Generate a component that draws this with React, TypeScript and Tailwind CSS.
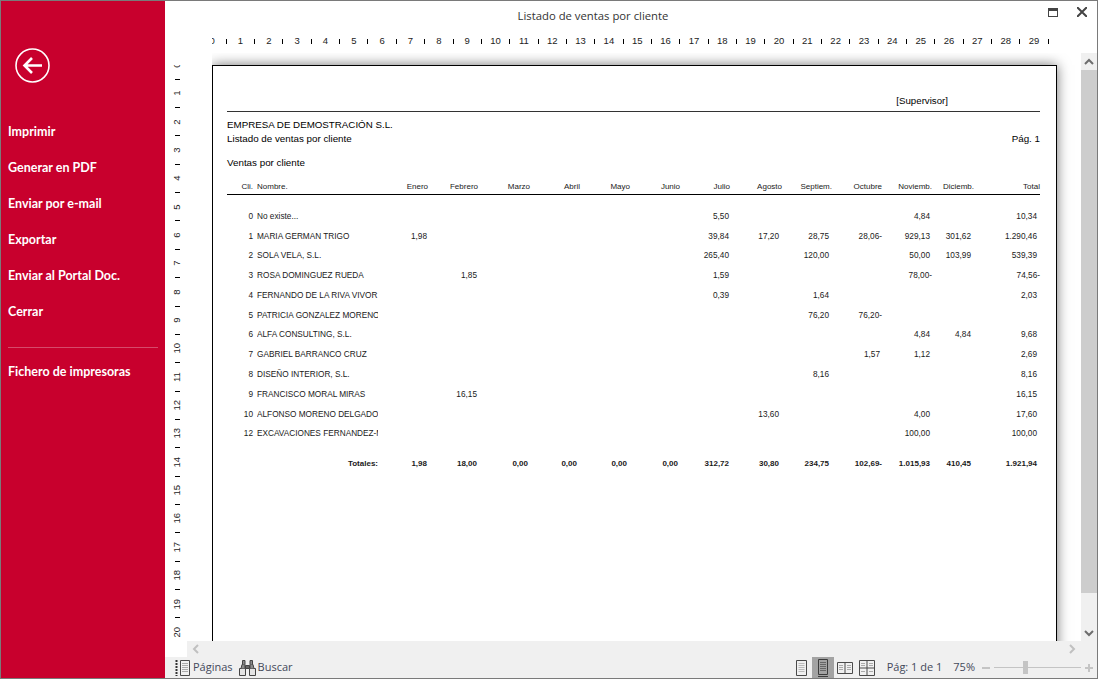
const MENU = ["Imprimir", "Generar en PDF", "Enviar por e-mail", "Exportar", "Enviar al Portal Doc.", "Cerrar"];

const HEADERS = ["Enero", "Febrero", "Marzo", "Abril", "Mayo", "Junio", "Julio", "Agosto", "Septiem.", "Octubre", "Noviemb.", "Diciemb.", "Total"];

// los importes no llegan al borde derecho de la cabecera, y no todos igual
const PADS = ["pr-[1px]", "pr-[1px]", "pr-[2px]", "pr-[3px]", "pr-[3px]", "pr-[2px]", "pr-[1px]", "pr-[3px]", "pr-[3px]", "pr-[2px]", "pr-[2px]", "pr-[3px]", "pr-[3px]"];

// fila: codigo, nombre, y columna -> importe
const ROWS: [string, string, Record<number, string>][] = [
  ["0", "No existe...", { 6: "5,50", 10: "4,84", 12: "10,34" }],
  ["1", "MARIA GERMAN TRIGO", { 0: "1,98", 6: "39,84", 7: "17,20", 8: "28,75", 9: "28,06-", 10: "929,13", 11: "301,62", 12: "1.290,46" }],
  ["2", "SOLA VELA, S.L.", { 6: "265,40", 8: "120,00", 10: "50,00", 11: "103,99", 12: "539,39" }],
  ["3", "ROSA DOMINGUEZ RUEDA", { 1: "1,85", 6: "1,59", 10: "78,00-", 12: "74,56-" }],
  ["4", "FERNANDO DE LA RIVA VIVOR", { 6: "0,39", 8: "1,64", 12: "2,03" }],
  ["5", "PATRICIA GONZALEZ MORENO", { 8: "76,20", 9: "76,20-" }],
  ["6", "ALFA CONSULTING, S.L.", { 10: "4,84", 11: "4,84", 12: "9,68" }],
  ["7", "GABRIEL BARRANCO CRUZ", { 9: "1,57", 10: "1,12", 12: "2,69" }],
  ["8", "DISEÑO INTERIOR, S.L.", { 8: "8,16", 12: "8,16" }],
  ["9", "FRANCISCO MORAL MIRAS", { 1: "16,15", 12: "16,15" }],
  ["10", "ALFONSO MORENO DELGADO", { 7: "13,60", 10: "4,00", 12: "17,60" }],
  ["12", "EXCAVACIONES FERNANDEZ-MARTIN", { 10: "100,00", 12: "100,00" }],
];

const TOTALS = ["1,98", "18,00", "0,00", "0,00", "0,00", "0,00", "312,72", "30,80", "234,75", "102,69-", "1.015,93", "410,45", "1.921,94"];

const GRID = "grid grid-cols-[26px_4px_121px_50px_50px_52px_50px_50px_50px_50px_52px_50px_50px_50px_42px_66px]";

function Amount({ value, col, bold }: { value?: string; col: number; bold?: boolean }) {
  const neg = value?.endsWith("-");
  return (
    <div className={`whitespace-nowrap text-right ${neg ? "pr-0" : PADS[col]} ${bold ? "font-bold" : ""}`}>{value}</div>
  );
}

function Row({ code, name, values }: { code: string; name: string; values: Record<number, string> }) {
  return (
    <div className={`${GRID} h-[19.8px] items-center`}>
      <div className="text-right">{code}</div>
      <div />
      <div className="overflow-hidden whitespace-nowrap">{name}</div>
      {HEADERS.map((h, i) => (
        <Amount key={h} value={values[i]} col={i} />
      ))}
    </div>
  );
}

function Report() {
  return (
    <div className="h-[1190px] w-[845px] shrink-0 border border-black bg-white pl-[14px] pt-[30px] font-['Liberation_Sans',sans-serif] text-black shadow-[0_0_12px_rgba(0,0,0,0.55)]">
      <div className="w-[813px]">
        <div className="flex h-[10px] justify-end pr-[92px] text-[9.7px] leading-[10px]">[Supervisor]</div>
        <div className="mt-[5px] h-[1px] bg-[#333]" />
        <div className="mt-[6px] text-[9.75px] leading-[14px]">EMPRESA DE DEMOSTRACIÓN S.L.</div>
        <div className="flex justify-between text-[9.8px] leading-[14px]">
          <span>Listado de ventas por cliente</span>
          <span>Pág. 1</span>
        </div>
        <div className="mt-[10px] text-[9.8px] leading-[14px]">Ventas por cliente</div>
        <div className={`${GRID} mt-[10px] h-[14px] items-center text-[8px] text-[#1a1a1a]`}>
          <div className="text-right">Cli.</div>
          <div />
          <div>Nombre.</div>
          {HEADERS.map((h) => (
            <div key={h} className="whitespace-nowrap text-right">{h}</div>
          ))}
        </div>
        <div className="h-[1px] bg-black" />
        <div className="mt-[12px] text-[8.25px] text-[#1a1a1a]">
          {ROWS.map(([code, name, values]) => (
            <Row key={code} code={code} name={name} values={values} />
          ))}
          <div className={`${GRID} mt-[10px] h-[19.8px] items-center text-[8px]`}>
            <div />
            <div />
            <div className="text-right font-bold">Totales:</div>
            {TOTALS.map((t, i) => (
              <Amount key={i} value={t} col={i} bold />
            ))}
          </div>
        </div>
      </div>
    </div>
  );
}

function HorizontalRuler() {
  return (
    <div className="flex h-[24px] shrink-0 pl-[47px] pr-[41px]">
      <div className="flex flex-1 items-center overflow-hidden font-['Liberation_Sans',sans-serif] text-[9.5px] text-[#222]">
        <div className="-ml-[7px] flex items-center">
          {Array.from({ length: 30 }, (_, i) => (
            <div key={i} className="flex items-center">
              <span className="w-[14.18px] text-center">{i}</span>
              <span className="flex w-[14.18px] justify-center"><span className="h-[5px] w-[1px] bg-black" /></span>
            </div>
          ))}
        </div>
      </div>
    </div>
  );
}

function VerticalRuler() {
  return (
    <div className="w-[47px] shrink-0 overflow-hidden pt-[12px] font-['Liberation_Sans',sans-serif] text-[9.5px] text-[#222]">
      <div className="h-full overflow-hidden">
        <div className="-mt-[7px] flex flex-col">
          {Array.from({ length: 21 }, (_, i) => (
            <div key={i} className="flex flex-col">
              <span className="flex h-[14.18px] w-[24px] items-center justify-center"><span className="-rotate-90 whitespace-nowrap">{i}</span></span>
              <span className="flex h-[14.18px] w-[24px] items-center justify-center"><span className="h-[1px] w-[5px] bg-black" /></span>
            </div>
          ))}
        </div>
      </div>
    </div>
  );
}

function Chevron({ d, color = "#6e6e6e" }: { d: string; color?: string }) {
  return (
    <svg width="10" height="10" viewBox="0 0 10 10" fill="none" stroke={color} strokeWidth="2">
      <path d={d} />
    </svg>
  );
}

function PagesIcon() {
  return (
    <svg width="16" height="18" viewBox="0 0 16 18" fill="none">
      <path d="M1.5 1v16" stroke="#333" strokeWidth="2" strokeDasharray="2 1" />
      <path d="M5.5 1.5h9v15h-9z" stroke="#4a4a4a" />
      <path d="M7 4.5h6M7 6.5h6M7 8.5h6M7 10.5h6M7 12.5h6" stroke="#aaa" />
    </svg>
  );
}

function BinocularsIcon() {
  return (
    <svg width="17" height="17" viewBox="0 0 17 17" fill="none" stroke="#444">
      <path d="M.5 9.5h6v7h-6zM10.5 9.5h6v7h-6z" fill="#e4e4e4" />
      <path d="M2 9.5l1-4h3v4M15 9.5l-1-4h-3v4" fill="#8a8a8a" />
      <path d="M3.5 5.5v-4h2.5v4M11 5.5v-4h2.5v4" fill="#8a8a8a" />
      <path d="M6.5 6.5h4v3h-4z" fill="#666" />
    </svg>
  );
}

function ViewIcon({ kind }: { kind: "page" | "full" | "book" | "grid" }) {
  if (kind === "page")
    return (
      <svg width="11" height="16" viewBox="0 0 11 16" fill="none">
        <path d="M.5.5h10v15H.5z" stroke="#4a4a4a" />
        <path d="M2.5 3.5h6M2.5 5.5h6M2.5 7.5h6M2.5 9.5h6M2.5 11.5h6" stroke="#bbb" />
      </svg>
    );
  if (kind === "full")
    return (
      <svg width="10" height="18" viewBox="0 0 10 18" fill="none">
        <path d="M.5.5h9v15H.5z" stroke="#3c3c3c" />
        <path d="M2 3.5h6M2 5.5h6M2 7.5h6M2 9.5h6M2 11.5h6" stroke="#666" />
        <path d="M0 17.5h10" stroke="#3c3c3c" />
      </svg>
    );
  if (kind === "book")
    return (
      <svg width="16" height="12" viewBox="0 0 16 12" fill="none">
        <path d="M.5.5h15v11H.5zM8 .5v11" stroke="#4a4a4a" />
        <path d="M2 3.5h4M2 5.5h4M2 7.5h4M10 3.5h4M10 5.5h4M10 7.5h4" stroke="#aaa" />
      </svg>
    );
  return (
    <svg width="16" height="16" viewBox="0 0 16 16" fill="none">
      <path d="M.5.5h15v15H.5zM8 .5v15M.5 8h15" stroke="#4a4a4a" />
      <path d="M2 3.5h4M10 3.5h4M2 5.5h4M10 5.5h4M2 11.5h4M10 11.5h4" stroke="#aaa" />
    </svg>
  );
}

export default function App() {
  return (
    <div className="flex h-[679px] w-[1098px] overflow-hidden border border-[#7a7a7a] bg-white">
      <aside className="flex w-[164px] shrink-0 flex-col bg-[#c8002d] font-['Lato',sans-serif] text-white">
        <div className="pl-[14px] pt-[47px]">
          <svg width="35" height="35" viewBox="0 0 35 35" fill="none" stroke="white">
            <circle cx="17.5" cy="17.5" r="16.5" strokeWidth="1.6" />
            <path d="M27 17.5H10M17 10L9.5 17.5l7.5 7.5" strokeWidth="2.6" />
          </svg>
        </div>
        <nav className="mt-[31px] flex flex-col px-[7px]">
          {MENU.map((m) => (
            <a key={m} className="flex h-[36px] items-center text-[12.5px] font-bold">{m}</a>
          ))}
          <div className="mt-[17px] h-[1px] bg-[#d64a6a]" />
          <a className="mt-[6px] flex h-[36px] items-center text-[12.5px] font-bold">Fichero de impresoras</a>
        </nav>
      </aside>

      <main className="flex min-w-0 flex-1 flex-col">
        <header className="relative flex h-[28px] shrink-0 items-center justify-center pr-[76px] pt-[2px] font-['Open_Sans',sans-serif] text-[11.3px] text-[#333]">
          Listado de ventas por cliente
          <div className="absolute right-[10px] top-[6px] flex items-center gap-[19px]">
            <div className="h-[9px] w-[10px] border border-t-[3px] border-[#444]" />
            <svg width="10" height="10" viewBox="0 0 10 10" stroke="#444" strokeWidth="2"><path d="M0 0l10 10M10 0L0 10" /></svg>
          </div>
        </header>

        <HorizontalRuler />

        <div className="flex min-h-0 flex-1">
          <VerticalRuler />
          <div className="min-w-0 flex-1 overflow-hidden pt-[12px]">
            <Report />
          </div>
          <div className="flex w-[16px] shrink-0 flex-col bg-[#f0f0f0]">
            <div className="flex h-[17px] items-center justify-center"><Chevron d="M1 7l4-4 4 4" /></div>
            <div className="h-[523px] bg-[#cdcdcd]" />
            <div className="flex-1" />
            <div className="flex h-[17px] items-center justify-center"><Chevron d="M1 3l4 4 4-4" /></div>
          </div>
        </div>

        <div className="flex h-[16px] shrink-0">
          <div className="w-[22px] bg-white" />
          <div className="flex flex-1 items-center justify-between bg-[#f0f0f0] px-[4px] pr-[20px]">
            <Chevron d="M7 1L3 5l4 4" color="#c0c0c0" />
            <Chevron d="M3 1l4 4-4 4" color="#c0c0c0" />
          </div>
        </div>

        <footer className="flex h-[21px] shrink-0 items-center bg-[#f0f0f0] pl-[10px] font-['Open_Sans',sans-serif] text-[11px] text-[#44495a]">
          <PagesIcon />
          <span className="ml-[2px]">Páginas</span>
          <span className="ml-[6px]"><BinocularsIcon /></span>
          <span className="ml-[2px]">Buscar</span>
          <div className="ml-auto flex h-full items-center">
            <ViewIcon kind="page" />
            <div className="ml-[5px] flex h-full w-[22px] items-center justify-center bg-[#a3a3a3]"><ViewIcon kind="full" /></div>
            <span className="ml-[3px]"><ViewIcon kind="book" /></span>
            <span className="ml-[6px]"><ViewIcon kind="grid" /></span>
            <span className="ml-[12px]">Pág: 1 de 1</span>
            <span className="ml-[11px]">75%</span>
            <div className="ml-[7px] h-[2px] w-[8px] bg-[#c4c4c4]" />
            <div className="relative ml-[4px] h-[1px] w-[87px] bg-[#c4c4c4]">
              <div className="absolute left-[29px] top-[-6px] h-[13px] w-[5px] bg-[#c4c4c4]" />
            </div>
            <div className="relative ml-[4px] mr-[4px] h-[8px] w-[8px]">
              <div className="absolute left-0 top-[3px] h-[2px] w-[8px] bg-[#c4c4c4]" />
              <div className="absolute left-[3px] top-0 h-[8px] w-[2px] bg-[#c4c4c4]" />
            </div>
          </div>
        </footer>
      </main>
    </div>
  );
}
